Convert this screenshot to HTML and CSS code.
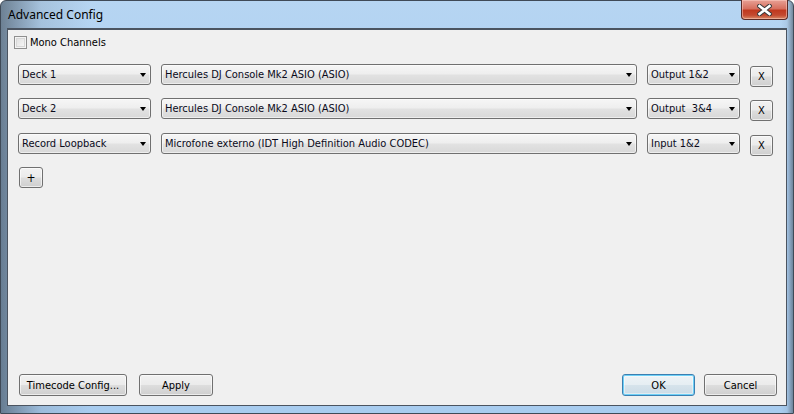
FILE: index.html
```html
<!DOCTYPE html>
<html>
<head>
<meta charset="utf-8">
<link rel="stylesheet" href="styles.css">
</head>
<body>
<div class="window">
  <div class="titlebar">
    <span class="title">Advanced Config</span>
    <div class="close"><svg width="15" height="12" viewBox="0 0 15 12"><path d="M2.5 2 L12.5 10 M12.5 2 L2.5 10" stroke="#3a3a3a" stroke-width="4.6" stroke-linecap="square"/><path d="M2.5 2 L12.5 10 M12.5 2 L2.5 10" stroke="#fff" stroke-width="2.6" stroke-linecap="square"/></svg></div>
  </div>
  <div class="client">
    <label class="check"><span class="box"></span>Mono Channels</label>
    <div class="rows">
      <div class="row">
        <div class="combo c1"><span>Deck 1</span><i class="arrow"></i></div>
        <div class="combo c2"><span>Hercules DJ Console Mk2 ASIO (ASIO)</span><i class="arrow"></i></div>
        <div class="combo c3"><span>Output 1&amp;2</span><i class="arrow"></i></div>
        <div class="btn x">X</div>
      </div>
      <div class="row">
        <div class="combo c1"><span>Deck 2</span><i class="arrow"></i></div>
        <div class="combo c2"><span>Hercules DJ Console Mk2 ASIO (ASIO)</span><i class="arrow"></i></div>
        <div class="combo c3"><span>Output&nbsp; 3&amp;4</span><i class="arrow"></i></div>
        <div class="btn x">X</div>
      </div>
      <div class="row">
        <div class="combo c1"><span>Record Loopback</span><i class="arrow"></i></div>
        <div class="combo c2"><span>Microfone externo (IDT High Definition Audio CODEC)</span><i class="arrow"></i></div>
        <div class="combo c3"><span>Input 1&amp;2</span><i class="arrow"></i></div>
        <div class="btn x">X</div>
      </div>
    </div>
    <div class="btn plus">+</div>
    <div class="footer">
      <div class="btn timecode">Timecode Config...</div>
      <div class="btn apply">Apply</div>
      <div class="spacer"></div>
      <div class="btn ok">OK</div>
      <div class="btn cancel">Cancel</div>
    </div>
  </div>
</div>
</body>
</html>
```
FILE: styles.css
```css
html, body {
  margin: 0;
  padding: 0;
  width: 794px;
  height: 414px;
  overflow: hidden;
}
body {
  font-family: "DejaVu Sans Condensed", "DejaVu Sans", sans-serif;
  font-size: 11px;
  color: #000;
}
.window {
  width: 794px;
  height: 414px;
  box-sizing: border-box;
  display: flex;
  flex-direction: column;
  border: 1px solid #3f4a57;
  border-radius: 6px 6px 0 0;
  background:
    linear-gradient(90deg, rgba(50,60,70,0.55) 0px, rgba(120,140,160,0.25) 40px, rgba(255,255,255,0) 90px),
    linear-gradient(270deg, rgba(50,60,70,0.5) 0px, rgba(120,140,160,0.15) 6px, rgba(255,255,255,0) 12px),
    linear-gradient(180deg, #b6d5f2 0%, #abcdf0 40%, #a8ccef 100%);
  padding: 0 6px 7px 6px;
}
.titlebar {
  height: 27px;
  flex: none;
  position: relative;
  display: flex;
  align-items: center;
}
.title {
  font-family: "Noto Sans", "Open Sans", sans-serif;
  font-size: 12px;
  color: #000;
  padding-left: 1px;
  margin-top: -1px;
}
.close {
  position: absolute;
  right: -1px;
  top: -1px;
  width: 45px;
  height: 19px;
  border: 1px solid #5a2b27;
  border-top: none;
  border-radius: 0 0 4px 4px;
  background: linear-gradient(180deg, #e8a195 0%, #d7705f 45%, #c0391f 55%, #c44a30 80%, #d98a66 100%);
  box-shadow: inset 0 0 0 1px rgba(255,210,200,0.5);
  display: flex;
  align-items: center;
  justify-content: center;
}
.client {
  flex: 1;
  background: #f0f0f0;
  border: 1px solid #4b5460;
  border-top: 2px solid #4b5460;
  position: relative;
  display: flex;
  flex-direction: column;
  padding: 5px 0 0 5px;
}
.check {
  display: flex;
  align-items: center;
  height: 15px;
}
.box {
  width: 11px;
  height: 11px;
  border: 1px solid #8f8f8f;
  background: linear-gradient(135deg, #dcdcdc, #fbfbfb);
  box-shadow: inset 0 0 0 1px #f4f4f4, inset 0 0 0 2px #d8d8d8;
  margin-right: 3px;
  margin-left: 1px;
}
.rows {
  margin-top: 14px;
  margin-left: 5px;
  display: flex;
  flex-direction: column;
  gap: 12px;
}
.row {
  display: flex;
  align-items: flex-start;
  height: 22px;
}
.row:nth-child(3) { margin-top: 1px; }
.combo {
  box-sizing: border-box;
  height: 21px;
  border: 1px solid #707070;
  border-radius: 3px;
  background: linear-gradient(180deg, #f6f6f6 0%, #eeeeee 48%, #e2e2e2 52%, #d8d8d8 100%);
  box-shadow: inset 0 0 0 1px rgba(255,255,255,0.55);
  display: flex;
  align-items: center;
  padding-left: 3px;
  position: relative;
  color: #0a0a1a;
}
.combo span { white-space: pre; }
.c1 { width: 133px; }
.c2 { width: 476px; margin-left: 10px; }
.c3 { width: 93px; margin-left: 10px; }
.arrow {
  position: absolute;
  right: 4px;
  top: 8px;
  width: 0;
  height: 0;
  border-left: 3.5px solid transparent;
  border-right: 3.5px solid transparent;
  border-top: 4px solid #000;
}
.btn {
  box-sizing: border-box;
  border: 1px solid #707070;
  border-radius: 3px;
  background: linear-gradient(180deg, #f2f2f2 0%, #ebebeb 48%, #dddddd 52%, #cfcfcf 100%);
  box-shadow: inset 0 0 0 1px rgba(255,255,255,0.6);
  display: flex;
  align-items: center;
  justify-content: center;
  color: #000;
}
.x {
  width: 23px;
  height: 21px;
  margin-left: 10px;
  margin-top: 2px;
}
.plus {
  width: 24px;
  height: 21px;
  margin-left: 6px;
  margin-top: 12px;
  font-size: 12px;
}
.footer {
  margin-top: auto;
  display: flex;
  align-items: center;
  padding: 0 9px 9px 6px;
  height: 22px;
}
.footer .btn { height: 22px; }
.timecode { width: 108px; }
.apply { width: 74px; margin-left: 12px; }
.spacer { flex: 1; }
.ok {
  width: 73px;
  border-color: #3c7fb1;
  box-shadow: inset 0 0 0 1px #6ed0f7, inset 0 0 0 2px rgba(255,255,255,0.4);
  background: linear-gradient(180deg, #eef3f6 0%, #e6eef3 48%, #d6e3eb 52%, #cbdbe6 100%);
}
.cancel { width: 73px; margin-left: 9px; }
```
